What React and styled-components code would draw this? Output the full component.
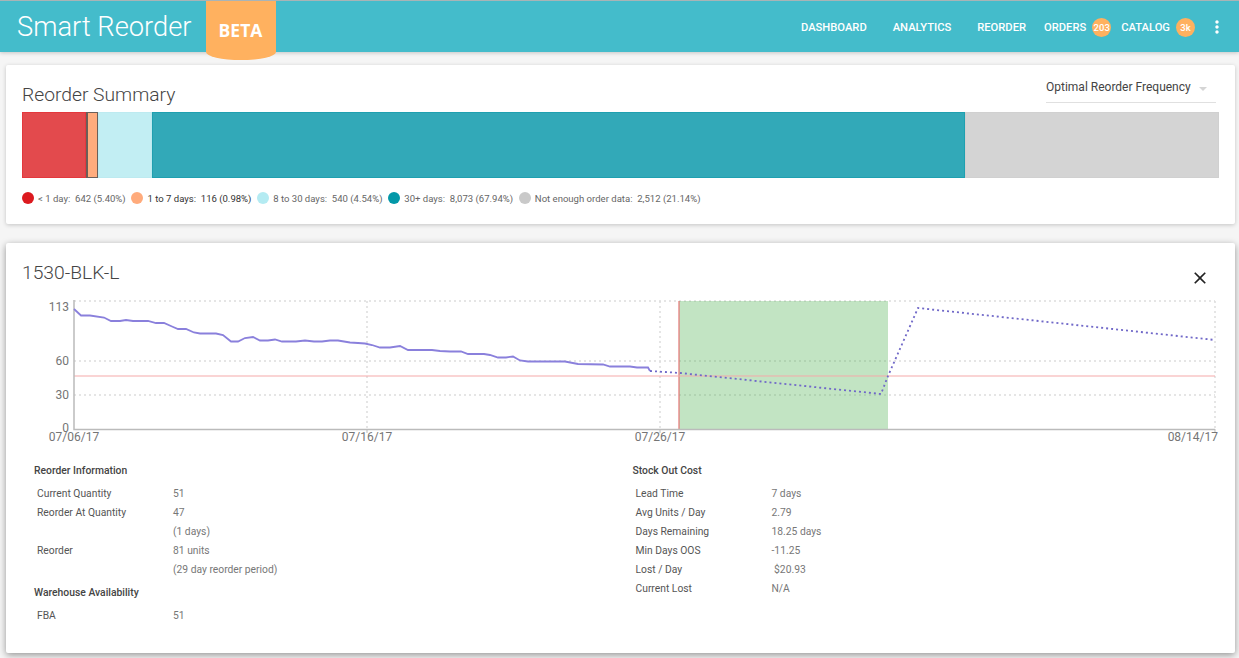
import React from 'react';
import styled, { createGlobalStyle } from 'styled-components';
import { MdClose, MdMoreVert } from 'react-icons/md';

const GlobalStyle = createGlobalStyle`
  html, body {
    margin: 0;
    height: 100%;
    background: #f5f5f5;
    font-family: Roboto, "Liberation Sans", sans-serif;
    overflow: hidden;
  }
`;

const Header = styled.header`
  position: relative;
  z-index: 2;
  display: flex;
  align-items: center;
  justify-content: space-between;
  height: 51px;
  padding: 0 12px 0 17px;
  border-top: 1px solid #a9b4b6;
  background: #44bccb;
  box-shadow: 0 1px 4px rgba(0, 0, 0, 0.2);
`;

const Brand = styled.div`
  display: flex;
  align-items: flex-start;
  height: 51px;
`;

const AppTitle = styled.h1`
  margin: 8px 0 0;
  font-size: 27.3px;
  line-height: 36px;
  font-weight: 300;
  color: #fff;
`;

const BetaBadge = styled.div`
  width: 70px;
  height: 59px;
  margin-left: 14px;
  padding-top: 18px;
  box-sizing: border-box;
  background: #ffb15f;
  border-radius: 0 0 50% 50% / 0 0 8px 8px;
  font-family: "Open Sans", sans-serif;
  font-size: 17.5px;
  line-height: 22px;
  font-weight: 700;
  text-align: center;
  color: #fff;
`;

const Nav = styled.nav`
  display: flex;
  align-items: center;
  padding-top: 1px;
`;

const NavLink = styled.a`
  display: flex;
  align-items: center;
  gap: 6px;
  padding: 0 ${(p) => (p.$tight ? '5px' : '13px')};
  font-size: 11.2px;
  font-weight: 500;
  color: #fff;
`;

const CountBadge = styled.span`
  display: flex;
  align-items: center;
  justify-content: center;
  width: 19px;
  height: 19px;
  border-radius: 50%;
  background: #ffb15f;
  font-size: 9.5px;
  font-weight: 500;
  color: #fff;
`;

const MenuButton = styled.span`
  display: flex;
  margin-left: 7px;
  color: #fff;
`;

const Main = styled.main`
  display: flex;
  flex-direction: column;
  gap: 19px;
  padding: 13px 4px 0 6px;
`;

const SummaryCard = styled.section`
  height: 159px;
  padding: 0 16px;
  background: #fff;
  border-radius: 2px;
  box-shadow: 0 1px 4px rgba(0, 0, 0, 0.2);
`;

const SummaryHead = styled.div`
  display: flex;
  justify-content: space-between;
  height: 47px;
  padding-right: 3px;
`;

const CardTitle = styled.h2`
  margin: 18px 0 0;
  font-size: 19.25px;
  line-height: 24px;
  font-weight: 300;
  color: #444;
`;

const SelectBox = styled.div`
  display: flex;
  align-items: center;
  justify-content: space-between;
  box-sizing: border-box;
  width: 170px;
  height: 28px;
  margin-top: 10px;
  padding: 0 9px 3px 0;
  border-bottom: 1px solid #e0e0e0;
  font-size: 12px;
  color: #444;
  white-space: nowrap;
`;

const Caret = styled.span`
  width: 0;
  height: 0;
  margin-top: 3px;
  border-left: 4px solid transparent;
  border-right: 4px solid transparent;
  border-top: 4px solid #d5d5d5;
`;

const Bar = styled.div`
  display: flex;
  height: 66px;
`;

const Segment = styled.div`
  box-sizing: border-box;
  flex: 0 0 ${(p) => p.$width}px;
  background: ${(p) => p.$color};
  border: 1px solid ${(p) => p.$edge};
  border-left-width: ${(p) => (p.$marked ? '2px' : '1px')};
`;

const Legend = styled.div`
  display: flex;
  align-items: center;
  gap: 5.75px;
  height: 16px;
  margin-top: 12px;
`;

const LegendItem = styled.div`
  display: flex;
  align-items: center;
  gap: 4px;
  font-size: 9.55px;
  color: ${(p) => (p.$active ? '#333' : '#666')};
  white-space: pre;
`;

const Dot = styled.span`
  width: 12px;
  height: 12px;
  border-radius: 50%;
  background: ${(p) => p.$color};
`;

const DetailCard = styled.section`
  height: 410px;
  background: #fff;
  border-radius: 2px;
  box-shadow: 0 2px 7px rgba(0, 0, 0, 0.4);
`;

const DetailHead = styled.div`
  display: flex;
  justify-content: space-between;
  height: 53px;
  padding: 0 25px 0 16px;
`;

const CloseButton = styled.span`
  display: flex;
  margin-top: 25px;
  color: #222;
`;

const ChartSvg = styled.svg`
  display: block;
  width: 1229px;
  height: 155px;
`;

const AxisLabel = styled.text`
  font-family: Roboto, sans-serif;
  font-size: 12px;
  fill: #757575;
`;

const InfoGrid = styled.div`
  display: grid;
  grid-template-columns: 598.5px 1fr;
  margin-top: 10px;
  padding-left: 28px;
`;

const InfoHeading = styled.h3`
  margin: ${(p) => (p.$spaced ? '4px' : '0')} 0 4px;
  font-size: 10.35px;
  line-height: 19px;
  font-weight: 500;
  color: #444;
`;

const InfoRow = styled.div`
  display: grid;
  grid-template-columns: 136px 1fr;
  padding-left: 3px;
  font-size: 10.3px;
  line-height: 19px;
  white-space: pre;
`;

const InfoLabel = styled.span`
  color: #555;
`;

const InfoValue = styled.span`
  color: #777;
`;

const navItems = [
  { label: 'DASHBOARD' },
  { label: 'ANALYTICS' },
  { label: 'REORDER' },
  { label: 'ORDERS', count: '203' },
  { label: 'CATALOG', count: '3k' },
];

const segments = [
  { width: 64, color: '#e34a4d', edge: '#e4383d' },
  { width: 12, color: '#ffac7d', edge: '#6b5f58', marked: true },
  { width: 54, color: '#c2eef3', edge: '#bdeaf0' },
  { width: 813, color: '#32a9b8', edge: '#1fa0b0' },
  { width: 254, color: '#d4d4d4', edge: '#d0d0d0' },
];

const legend = [
  { color: '#dc1a1f', text: '< 1 day:  642 (5.40%)' },
  { color: '#ffab7c', text: '1 to 7 days:  116 (0.98%)', active: true },
  { color: '#b4ebf2', text: '8 to 30 days:  540 (4.54%)' },
  { color: '#0398a8', text: '30+ days:  8,073 (67.94%)' },
  { color: '#c9c9c9', text: 'Not enough order data:  2,512 (21.14%)' },
];

const reorderRows = [
  ['Current Quantity', '51'],
  ['Reorder At Quantity', '47'],
  ['', '(1 days)'],
  ['Reorder', '81 units'],
  ['', '(29 day reorder period)'],
];

const stockRows = [
  ['Lead Time', '7 days'],
  ['Avg Units / Day', '2.79'],
  ['Days Remaining', '18.25 days'],
  ['Min Days OOS', '-11.25'],
  ['Lost / Day', '\u00a0$20.93'],
  ['Current Lost', 'N/A'],
];

const history =
  '74,309 81,315.5 90,315.5 104,317.5 111,321 120,321 126,320 133,321 148,321 156,323 164,323 172,326.5 178,329 186,329 194,332.5 200,333.5 216,333.5 223,335 231,341.5 238,341.5 245,338 253,337 260,340.5 268,340.5 275,339.5 282,341.5 296,341.5 305,340.5 314,341.5 322,341.5 330,340.5 338,340.5 350,342.5 358,343 365,343.5 372,345 380,347.5 390,347.5 400,346 408,350 432,350 440,351 450,351.5 461,351.5 468,354 484,354 490,355 498,357.5 506,357.5 513,356.5 520,360.5 528,361.5 565,361.5 578,364 603,364.5 610,366.5 630,366.5 637,367.5 648,367.5 650,371';
const forecast = '650,371 680,373 881,394 888,376 918,308 1215,340';

const Chart = () => (
  <ChartSvg viewBox="6 296 1229 155">
    <g stroke="#ddd" strokeWidth="1.5" strokeDasharray="2 3" fill="none">
      <path d="M74 301H1215M74 361H1215M74 395H1215" />
      <path d="M367 301V429M660 301V429M1215 301V429" />
    </g>
    <path d="M367 429V433M660 429V433M1215 429V433" stroke="#bbb" fill="none" />
    <rect x="679" y="301" width="209" height="128" fill="#4caf50" fillOpacity="0.34" />
    <path d="M679 301V429" stroke="#e57373" strokeWidth="1.2" fill="none" />
    <path d="M74 376H1215" stroke="#f5a9a9" strokeWidth="1" fill="none" />
    <path d="M74 300V429.5H1215" stroke="#bbb" strokeWidth="1.5" fill="none" />
    <polyline points={history} stroke="#8a80dc" strokeWidth="1.8" fill="none" />
    <polyline points={forecast} stroke="#7068c8" strokeWidth="1.8" strokeDasharray="2 3" fill="none" />
    <AxisLabel x="69" y="311" textAnchor="end">113</AxisLabel>
    <AxisLabel x="69" y="365" textAnchor="end">60</AxisLabel>
    <AxisLabel x="69" y="399" textAnchor="end">30</AxisLabel>
    <AxisLabel x="69" y="432" textAnchor="end">0</AxisLabel>
    <AxisLabel x="74" y="441" textAnchor="middle">07/06/17</AxisLabel>
    <AxisLabel x="367" y="441" textAnchor="middle">07/16/17</AxisLabel>
    <AxisLabel x="660" y="441" textAnchor="middle">07/26/17</AxisLabel>
    <AxisLabel x="1218" y="441" textAnchor="end">08/14/17</AxisLabel>
  </ChartSvg>
);

const Rows = ({ rows }) =>
  rows.map(([label, value], i) => (
    <InfoRow key={i}>
      <InfoLabel>{label}</InfoLabel>
      <InfoValue>{value}</InfoValue>
    </InfoRow>
  ));

const App = () => (
  <>
    <GlobalStyle />
    <Header>
      <Brand>
        <AppTitle>Smart Reorder</AppTitle>
        <BetaBadge>BETA</BetaBadge>
      </Brand>
      <Nav>
        {navItems.map((item) => (
          <NavLink key={item.label} $tight={!!item.count}>
            {item.label}
            {item.count && <CountBadge>{item.count}</CountBadge>}
          </NavLink>
        ))}
        <MenuButton>
          <MdMoreVert size={20} />
        </MenuButton>
      </Nav>
    </Header>
    <Main>
      <SummaryCard>
        <SummaryHead>
          <CardTitle>Reorder Summary</CardTitle>
          <SelectBox>
            Optimal Reorder Frequency
            <Caret />
          </SelectBox>
        </SummaryHead>
        <Bar>
          {segments.map((s) => (
            <Segment key={s.color} $width={s.width} $color={s.color} $edge={s.edge} $marked={s.marked} />
          ))}
        </Bar>
        <Legend>
          {legend.map((l) => (
            <LegendItem key={l.color} $active={l.active}>
              <Dot $color={l.color} />
              {l.text}
            </LegendItem>
          ))}
        </Legend>
      </SummaryCard>
      <DetailCard>
        <DetailHead>
          <CardTitle>1530-BLK-L</CardTitle>
          <CloseButton>
            <MdClose size={20} />
          </CloseButton>
        </DetailHead>
        <Chart />
        <InfoGrid>
          <div>
            <InfoHeading>Reorder Information</InfoHeading>
            <Rows rows={reorderRows} />
            <InfoHeading $spaced>Warehouse Availability</InfoHeading>
            <Rows rows={[['FBA', '51']]} />
          </div>
          <div>
            <InfoHeading>Stock Out Cost</InfoHeading>
            <Rows rows={stockRows} />
          </div>
        </InfoGrid>
      </DetailCard>
    </Main>
  </>
);

export default App;
